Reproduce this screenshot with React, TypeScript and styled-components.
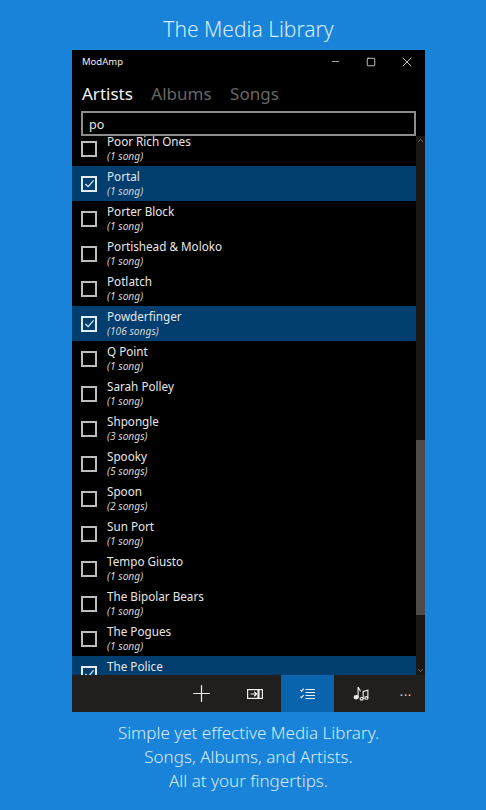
import React from "react";
import styled, { createGlobalStyle } from "styled-components";
import { ChevronUp, ChevronDown, Minus, Square, X, Plus } from "lucide-react";

const artists = [
  { name: "Poor Rich Ones", count: "1 song" },
  { name: "Portal", count: "1 song", checked: true },
  { name: "Porter Block", count: "1 song" },
  { name: "Portishead & Moloko", count: "1 song" },
  { name: "Potlatch", count: "1 song" },
  { name: "Powderfinger", count: "106 songs", checked: true },
  { name: "Q Point", count: "1 song" },
  { name: "Sarah Polley", count: "1 song" },
  { name: "Shpongle", count: "3 songs" },
  { name: "Spooky", count: "5 songs" },
  { name: "Spoon", count: "2 songs" },
  { name: "Sun Port", count: "1 song" },
  { name: "Tempo Giusto", count: "1 song" },
  { name: "The Bipolar Bears", count: "1 song" },
  { name: "The Pogues", count: "1 song" },
  { name: "The Police", count: "1 song", checked: true },
];

const GlobalStyle = createGlobalStyle`
  html, body {
    margin: 0;
    background: #1983d9;
  }
  * {
    box-sizing: border-box;
  }
`;

const Page = styled.div`
  width: 486px;
  height: 810px;
  padding-left: 11px;
  overflow: hidden;
  display: flex;
  flex-direction: column;
  align-items: center;
  background: #1983d9;
  font-family: "Noto Sans", sans-serif;
  color: #fff;
`;

const Heading = styled.h1`
  margin: 0;
  height: 50px;
  padding-top: 14px;
  font-size: 21px;
  line-height: 30px;
  font-weight: 300;
  color: #d8ecfb;
`;

const Window = styled.div`
  width: 353px;
  height: 662px;
  flex: none;
  display: flex;
  flex-direction: column;
  background: #000;
`;

const TitleBar = styled.div`
  height: 23px;
  padding-left: 10px;
  display: flex;
  align-items: center;
  justify-content: space-between;
  font-size: 9.5px;
  color: #eee;
`;

const WindowButtons = styled.div`
  display: flex;
  align-items: center;
  color: #e4e4e4;
`;

const WindowButton = styled.div`
  width: 36px;
  display: flex;
  align-items: center;
  justify-content: center;
`;

const Tabs = styled.div`
  height: 38px;
  padding: 4px 10px 0;
  display: flex;
  align-items: center;
  gap: 18.5px;
`;

const Tab = styled.span<{ $active?: boolean }>`
  font-size: 17px;
  line-height: 26px;
  color: ${(p) => (p.$active ? "#f2f2f2" : "#666")};
`;

const SearchBox = styled.div`
  margin: 0 9px;
  height: 25px;
  padding: 1px 6px 0;
  display: flex;
  align-items: center;
  border: 2px solid #8c8c8c;
  font-size: 12.5px;
  color: #e8e8e8;
`;

const Body = styled.div`
  flex: 1;
  min-height: 0;
  display: flex;
`;

const List = styled.div`
  flex: 1;
  overflow: hidden;
`;

const Rows = styled.div`
  margin-top: -5px;
`;

const Row = styled.div<{ $checked?: boolean }>`
  height: 35px;
  display: flex;
  align-items: center;
  gap: 10px;
  padding-left: 9px;
  background: ${(p) => (p.$checked ? "#003e6f" : "#000")};
`;

const Box = styled.div<{ $checked?: boolean }>`
  width: 16px;
  height: 16px;
  flex: none;
  border: 2px solid ${(p) => (p.$checked ? "#e4edf4" : "#bdbdbd")};
  display: flex;
  align-items: center;
  justify-content: center;
`;

const RowText = styled.div`
  display: flex;
  flex-direction: column;
`;

const Name = styled.span`
  font-size: 11.7px;
  line-height: 15px;
  color: #e6e6e6;
`;

const Count = styled.span`
  font-size: 10.2px;
  line-height: 14px;
  font-style: italic;
  color: #d4d4d4;
`;

const ScrollBar = styled.div`
  width: 9px;
  display: flex;
  flex-direction: column;
  align-items: center;
  background: #1a1715;
  color: #8a8a8a;
`;

const Track = styled.div`
  flex: 1;
  width: 100%;
  padding-top: 295px;
  padding-bottom: 51px;
  display: flex;
`;

const Thumb = styled.div`
  flex: 1;
  background: #4f4b49;
`;

const CommandBar = styled.div`
  height: 37px;
  display: flex;
  justify-content: flex-end;
  background: #211f1e;
`;

const CommandButton = styled.div<{ $active?: boolean }>`
  width: 53px;
  display: flex;
  align-items: center;
  justify-content: center;
  color: #eee;
  background: ${(p) => (p.$active ? "#0a64ad" : "transparent")};
`;

const More = styled.div`
  width: 38px;
  display: flex;
  align-items: center;
  justify-content: center;
  padding-bottom: 4px;
  font-size: 12px;
  letter-spacing: 1px;
  color: #ddd;
`;

const Footer = styled.div`
  padding-top: 9px;
  font-size: 17px;
  line-height: 24px;
  font-weight: 300;
  text-align: center;
  color: #d8ecfb;
`;

const Tick = () => (
  <svg width="11" height="11" viewBox="0 0 12 12" fill="none" stroke="#e8f0f6" strokeWidth="1.3">
    <path d="M1.5 6.5 L4.5 9.5 L10.5 2.5" />
  </svg>
);

const MoveIcon = () => (
  <svg width="16" height="10" viewBox="0 0 16 10" fill="none" stroke="currentColor" strokeWidth="1.2">
    <rect x="0.6" y="0.6" width="14.8" height="8.8" />
    <path d="M3.5 5 H9.5 M7.2 2.8 L9.6 5 L7.2 7.2" />
    <path d="M11.5 1 V9" strokeWidth="2.2" />
  </svg>
);

const ChecklistIcon = () => (
  <svg width="15" height="12" viewBox="0 0 15 12" fill="none" stroke="currentColor" strokeWidth="1.2">
    <path d="M0.5 2.2 L1.6 3.3 L3.6 0.6 M0.5 8.6 L1.6 9.7 L3.6 7" />
    <path d="M5.5 1.5 H15 M5.5 4.5 H15 M5.5 7.5 H15 M5.5 10.5 H15" />
  </svg>
);

const NotesIcon = () => (
  <svg width="16" height="17" viewBox="0 0 17 17" fill="none" stroke="currentColor" strokeWidth="1.2">
    <ellipse cx="3.4" cy="12.5" rx="2.2" ry="1.7" fill="currentColor" />
    <path d="M5.4 12.5 V1.5 C6 3.6 7.8 3.8 7.8 6.4" />
    <ellipse cx="9.2" cy="14.2" rx="1.7" ry="1.4" />
    <ellipse cx="14.2" cy="13.2" rx="1.7" ry="1.4" />
    <path d="M10.8 14 V6.2 L15.8 5 V13" />
  </svg>
);

export default function App() {
  return (
    <Page>
      <GlobalStyle />
      <Heading>The Media Library</Heading>
      <Window>
        <TitleBar>
          <span>ModAmp</span>
          <WindowButtons>
            <WindowButton>
              <Minus size={11} strokeWidth={1.6} />
            </WindowButton>
            <WindowButton>
              <Square size={10} strokeWidth={2} />
            </WindowButton>
            <WindowButton>
              <X size={16} strokeWidth={1.3} />
            </WindowButton>
          </WindowButtons>
        </TitleBar>
        <Tabs>
          <Tab $active>Artists</Tab>
          <Tab>Albums</Tab>
          <Tab>Songs</Tab>
        </Tabs>
        <SearchBox>po</SearchBox>
        <Body>
          <List>
            <Rows>
              {artists.map((a) => (
                <Row key={a.name} $checked={a.checked}>
                  <Box $checked={a.checked}>{a.checked && <Tick />}</Box>
                  <RowText>
                    <Name>{a.name}</Name>
                    <Count>({a.count})</Count>
                  </RowText>
                </Row>
              ))}
            </Rows>
          </List>
          <ScrollBar>
            <ChevronUp size={9} strokeWidth={2} />
            <Track>
              <Thumb />
            </Track>
            <ChevronDown size={9} strokeWidth={2} />
          </ScrollBar>
        </Body>
        <CommandBar>
          <CommandButton>
            <Plus size={27} strokeWidth={1.1} />
          </CommandButton>
          <CommandButton>
            <MoveIcon />
          </CommandButton>
          <CommandButton $active>
            <ChecklistIcon />
          </CommandButton>
          <CommandButton>
            <NotesIcon />
          </CommandButton>
          <More>...</More>
        </CommandBar>
      </Window>
      <Footer>
        Simple yet effective Media Library.
        <br />
        Songs, Albums, and Artists.
        <br />
        All at your fingertips.
      </Footer>
    </Page>
  );
}
